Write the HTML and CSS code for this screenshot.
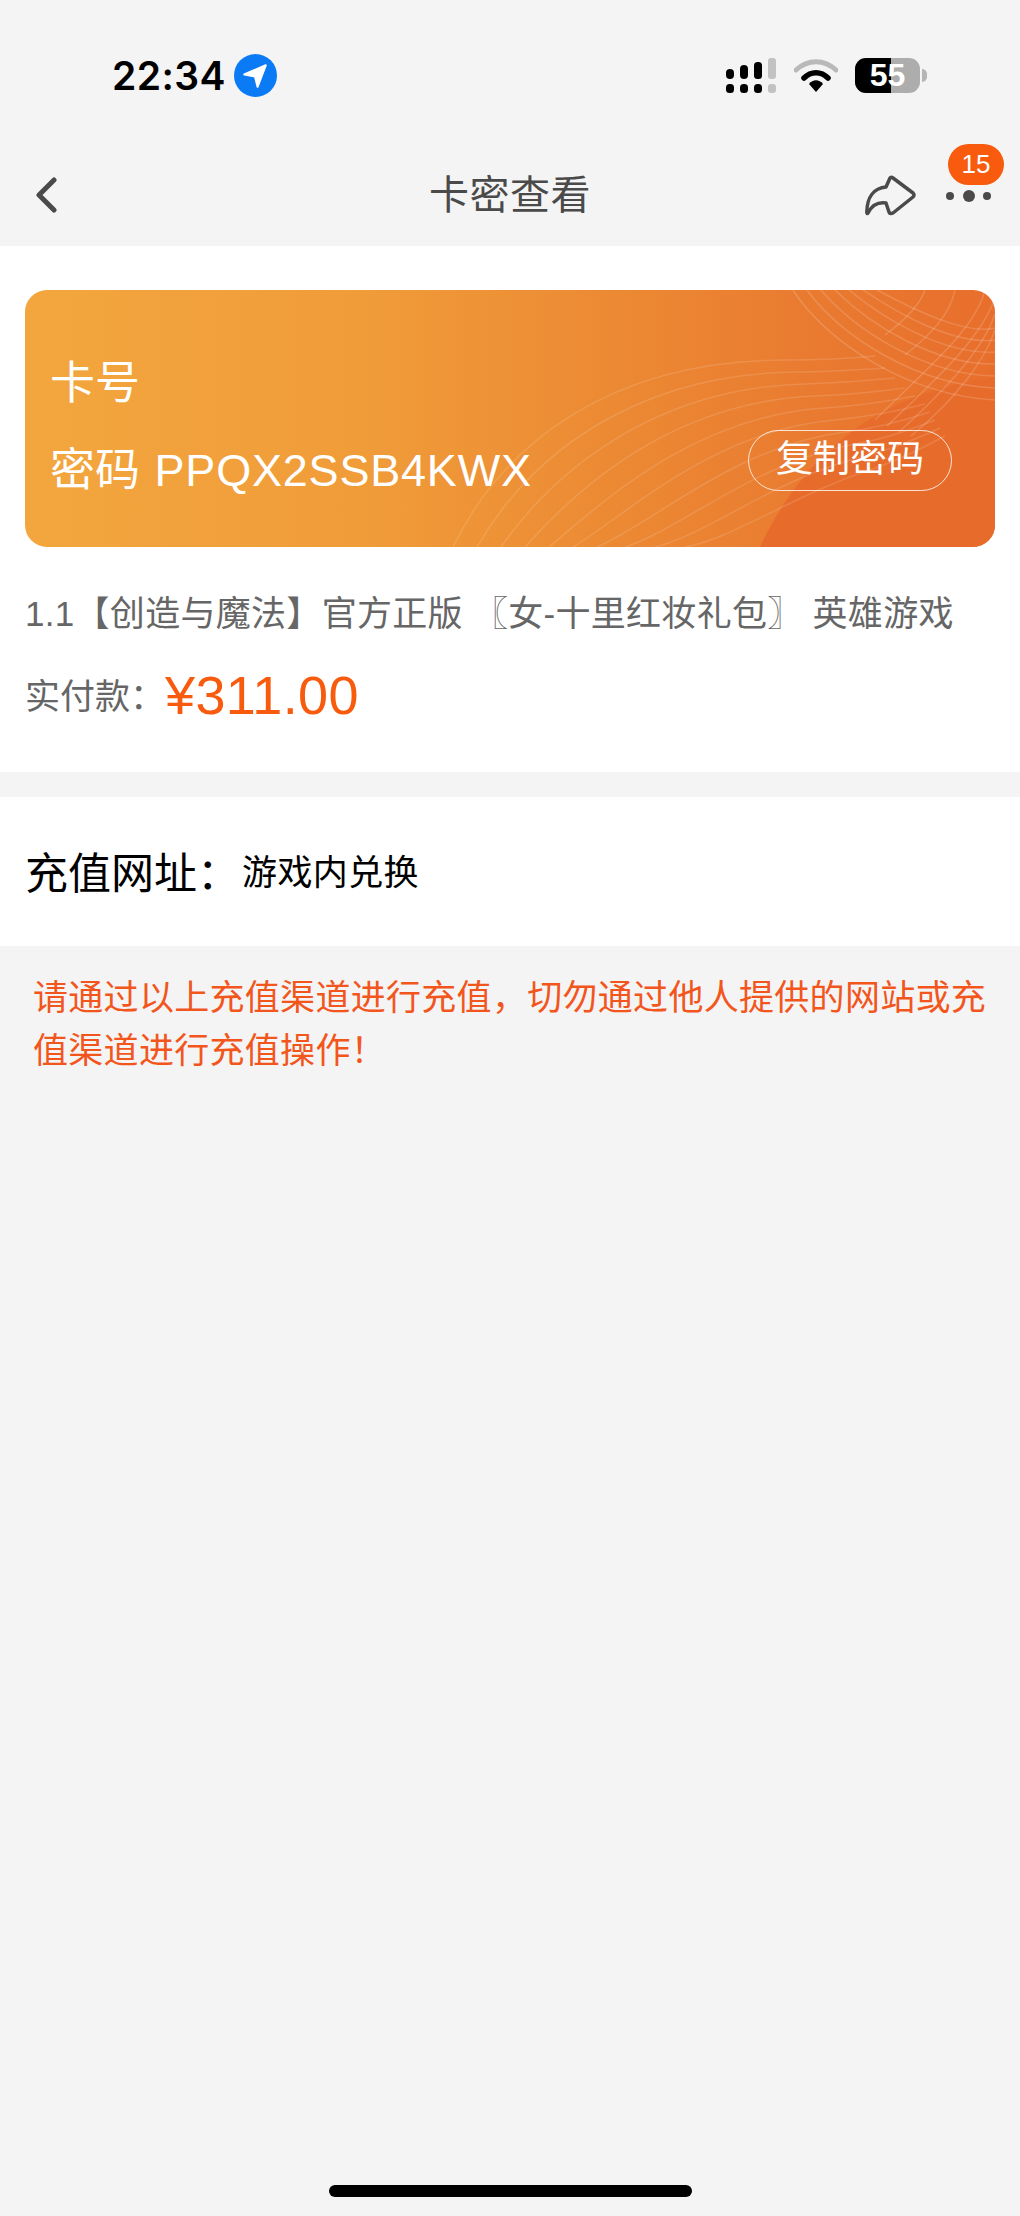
FILE: index.html
```html
<!DOCTYPE html>
<html lang="zh-CN">
<head>
  <meta charset="utf-8">
  <title>卡密查看</title>
  <link rel="stylesheet" href="styles.css">
</head>
<body>
  <div class="page">
    <div class="status">
      <div class="status-left">
        <span class="time">22:34</span>
        <svg class="locate" width="43" height="43" viewBox="0 0 42 42">
          <circle cx="21" cy="21" r="21" fill="#0a7af5"/>
          <path d="M10 20 L31 11 L23 32 L20.500 22 Z" fill="#fff" stroke="#fff" stroke-width="2" stroke-linejoin="round"/>
        </svg>
      </div>
      <div class="status-right">
        <svg width="52" height="35" viewBox="0 0 52 35">
          <rect x="1" y="11" width="8" height="10" rx="4"/>
          <rect x="15" y="7" width="8" height="14" rx="4"/>
          <rect x="29" y="4" width="8" height="17" rx="3.5"/>
          <rect x="43" y="0" width="8" height="21" rx="3" fill="#c2c2c2"/>
          <rect x="1" y="26" width="8" height="9" rx="3.5"/>
          <rect x="15" y="26" width="8" height="9" rx="3.5"/>
          <rect x="29" y="26" width="8" height="9" rx="3.5"/>
          <rect x="43" y="26" width="8" height="9" rx="3" fill="#c2c2c2"/>
        </svg>
        <svg width="44" height="33" viewBox="0 0 44 33">
          <path d="M2 11 C14 0 30 0 42 11" fill="none" stroke="#b9b9b9" stroke-width="5" stroke-linecap="round"/>
          <path d="M10 19 C17 12 27 12 34 19" fill="none" stroke="#000" stroke-width="5.5" stroke-linecap="round"/>
          <path d="M15 25 C19 20 25 20 29 25 L22 33 Z" fill="#000"/>
        </svg>
        <div class="battery">
          <div class="battery-body">
            <span class="battery-level"></span>
            <span class="battery-num">55</span>
          </div>
          <span class="battery-tip"></span>
        </div>
      </div>
    </div>

    <div class="nav">
      <div class="nav-left">
        <svg class="back" width="22" height="36" viewBox="0 0 22 36">
          <path d="M19 3 L4 18 L19 33" fill="none" stroke="#4a4a4a" stroke-width="5" stroke-linecap="round" stroke-linejoin="round"/>
        </svg>
      </div>
      <div class="nav-title">卡密查看</div>
      <div class="nav-right">
        <svg class="share" width="52" height="41" viewBox="0 0 52 41">
          <path d="M25 3 Q26 1.500 28 3 L48 18 Q50 20 48 22 L28 38 Q25 39.500 24 37 L21 28 C14 27 7 30 3 38 Q2 39.500 1.800 37 C2 22 9 13 21 12 Z" fill="none" stroke="#4a4a4a" stroke-width="3.500" stroke-linejoin="round"/>
        </svg>
        <div class="more">
          <span class="dot"></span>
          <span class="dot dot-big"></span>
          <span class="dot"></span>
          <span class="badge">15</span>
        </div>
      </div>
    </div>

    <div class="goods">
      <div class="card">
        <svg class="card-lines" width="970" height="257" viewBox="0 0 970 257">
          <path d="M970 87 C880 100 790 140 735 257 L970 257 Z" fill="#e76c2b"/>
          <g fill="none" stroke="#fff" stroke-opacity=".13" stroke-width="1.500">
            <path d="M428 257 C480 150 590 70 760 70 C800 70 830 68 850 66"/>
            <path d="M452 257 C505 165 610 84 770 82 C800 82 830 80 860 78"/>
            <path d="M476 257 C530 180 630 98 780 94 C810 93 840 91 870 88"/>
            <path d="M500 257 C555 195 650 112 790 106 C820 105 850 102 880 98"/>
            <path d="M524 257 C580 210 670 126 800 118 C830 116 860 112 890 106"/>
            <path d="M548 257 C605 222 690 140 810 130 C840 127 870 122 900 114"/>
            <path d="M572 257 C630 232 710 156 820 142 C845 139 875 132 905 122"/>
            <path d="M600 257 C655 240 730 172 830 154 C855 150 880 142 910 130"/>
            <path d="M630 257 C680 246 750 188 840 166 C860 161 885 152 915 138"/>
            <path d="M660 257 C705 250 770 204 850 178 C865 173 890 162 920 146"/>
          </g>
          <g fill="none" stroke="#fff" stroke-opacity=".16" stroke-width="1.500">
            <path d="M768 0 C800 50 880 105 970 110"/>
            <path d="M782 0 C815 45 890 95 970 98"/>
            <path d="M796 0 C830 40 900 85 970 86"/>
            <path d="M810 0 C845 35 910 75 970 74"/>
            <path d="M824 0 C860 30 920 65 970 62"/>
            <path d="M838 0 C875 25 930 55 970 50"/>
            <path d="M852 0 C890 20 940 45 970 38"/>
            <path d="M960 0 C950 40 900 80 850 130"/>
            <path d="M970 8 C955 50 910 90 862 136"/>
            <path d="M970 24 C958 60 920 100 874 142"/>
            <path d="M970 40 C960 70 930 110 886 146"/>
            <path d="M930 0 C925 25 905 45 880 65"/>
            <path d="M900 0 C895 15 880 30 860 45"/>
          </g>
        </svg>
        <div class="card-text">
          <div class="card-row">卡号</div>
          <div class="card-bottom">
            <div class="card-row">密码 <span class="card-code">PPQX2SSB4KWX</span></div>
            <div class="copy-btn">复制密码</div>
          </div>
        </div>
      </div>
      <div class="goods-name">1.1【创造与魔法】官方正版 〖女-十里红妆礼包〗 英雄游戏</div>
      <div class="pay">
        <span class="pay-label">实付款&#65306;</span>
        <span class="pay-price">¥311.00</span>
      </div>
    </div>

    <div class="url">
      <span class="url-label">充值网址&#65306;</span>
      <span class="url-value">游戏内兑换</span>
    </div>

    <div class="notice">请通过以上充值渠道进行充值&#65292;切勿通过他人提供的网站或充值渠道进行充值操作&#65281;</div>

    <div class="home-bar"></div>
  </div>
</body>
</html>
```

FILE: styles.css
```css
* {
  box-sizing: border-box;
}

body {
  margin: 0;
  background: #f4f4f4;
  font-family: "Liberation Sans", "Noto Sans CJK SC", sans-serif;
}

.page {
  position: relative;
  height: 2216px;
  display: flex;
  flex-direction: column;
}

/* status bar */
.status {
  height: 140px;
  padding: 10px 93px 0 112px;
  display: flex;
  justify-content: space-between;
  align-items: center;
}

.status-left {
  display: flex;
  align-items: center;
  gap: 8px;
}

.time {
  font-family: Inter, "Liberation Sans", sans-serif;
  font-size: 39px;
  font-weight: 600;
  letter-spacing: .4px;
  color: #000;
}

.status-right {
  display: flex;
  align-items: center;
  gap: 17px;
}

.battery {
  display: flex;
  align-items: center;
  gap: 2px;
}

.battery-body {
  position: relative;
  width: 65px;
  height: 35px;
  border-radius: 11px;
  background: #adadad;
  overflow: hidden;
  display: flex;
  align-items: center;
  justify-content: center;
}

.battery-level {
  position: absolute;
  left: 0;
  top: 0;
  width: 36px;
  height: 35px;
  background: #000;
}

.battery-num {
  position: relative;
  color: #fff;
  font-size: 32px;
  font-weight: bold;
}

.battery-tip {
  width: 5px;
  height: 13px;
  border-radius: 0 5px 5px 0;
  background: #b5b5b5;
}

/* nav */
.nav {
  height: 106px;
  padding: 20px 29px 0 35px;
  display: grid;
  grid-template-columns: 1fr auto 1fr;
}

.back {
  margin-top: 17px;
}

.nav-title {
  font-size: 40px;
  letter-spacing: .5px;
  line-height: 70px;
  color: #4a4a4a;
  margin-left: -6px;
}

.nav-right {
  display: flex;
  justify-content: flex-end;
  align-items: flex-start;
  gap: 29px;
}

.share {
  margin-top: 15px;
}

.more {
  width: 45px;
  height: 35px;
  margin-top: 18px;
  display: flex;
  align-items: center;
  justify-content: space-between;
  position: relative;
}

.dot {
  width: 8px;
  height: 8px;
  border-radius: 50%;
  background: #4a4a4a;
}

.dot-big {
  width: 12px;
  height: 12px;
}

.badge {
  position: absolute;
  left: 2px;
  top: -34px;
  width: 56px;
  height: 41px;
  border-radius: 21px;
  background: #f85a0e;
  color: #fff;
  font-size: 26px;
  line-height: 41px;
  text-align: center;
}

/* goods */
.goods {
  background: #fff;
  height: 526px;
  padding: 44px 25px 0;
}

.card {
  position: relative;
  height: 257px;
  border-radius: 22px;
  overflow: hidden;
  background: linear-gradient(90deg, #f3a63e 0%, #f09c39 35%, #ec8a34 60%, #e97a30 82%, #e86e2c 100%);
}

.card-lines {
  position: absolute;
  left: 0;
  top: 0;
}

.card-text {
  position: relative;
  height: 100%;
  padding: 64px 43px 0 25px;
  color: #fff;
}

.card-row {
  font-size: 45px;
  line-height: 60px;
}

.card-code {
  margin-left: 2px;
  letter-spacing: .8px;
}

.card-bottom {
  margin-top: 27px;
  display: flex;
  justify-content: space-between;
  align-items: flex-start;
}

.copy-btn {
  width: 204px;
  height: 61px;
  margin-top: -11px;
  border: 1px solid rgba(255, 255, 255, .8);
  border-radius: 31px;
  font-size: 37px;
  line-height: 57px;
  text-align: center;
}

.goods-name {
  margin-top: 42px;
  font-size: 35px;
  letter-spacing: .3px;
  line-height: 50px;
  color: #666;
  white-space: nowrap;
}

.pay {
  margin-top: 26px;
  display: flex;
  align-items: center;
  height: 60px;
}

.pay-label {
  width: 140px;
  padding-bottom: 3px;
  font-size: 35px;
  color: #666;
}

.pay-price {
  font-size: 54px;
  letter-spacing: .4px;
  color: #f85a0e;
}

/* url */
.url {
  margin-top: 25px;
  height: 149px;
  padding: 0 0 4px 25px;
  background: #fff;
  display: flex;
  align-items: center;
  color: #000;
}

.url-label {
  font-size: 43px;
  width: 217px;
}

.url-value {
  font-size: 35px;
  letter-spacing: .4px;
}

.notice {
  padding: 25px 25px 0 33px;
  font-size: 35px;
  letter-spacing: .3px;
  line-height: 53px;
  color: #f2561d;
}

.home-bar {
  position: absolute;
  left: 329px;
  top: 2185px;
  width: 363px;
  height: 12px;
  border-radius: 6px;
  background: #000;
}
```
